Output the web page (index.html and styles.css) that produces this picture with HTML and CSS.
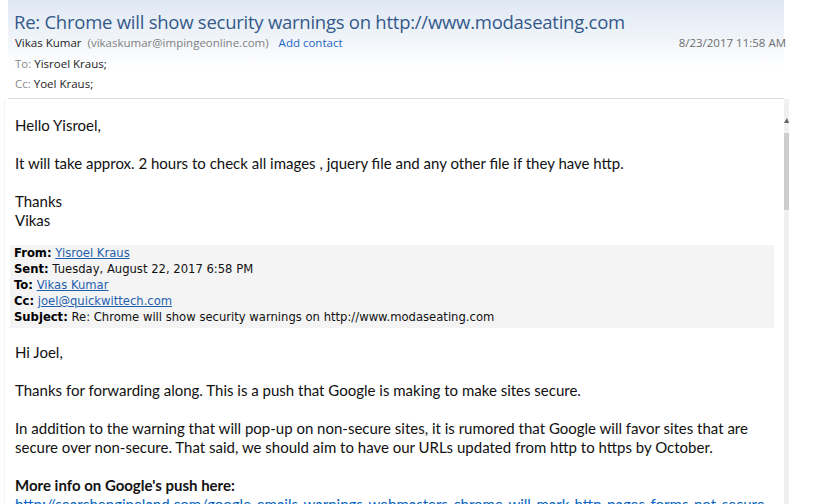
FILE: index.html
```html
<!DOCTYPE html>
<html>
<head>
<meta charset="utf-8">
<link rel="stylesheet" href="styles.css">
</head>
<body>
<div class="window">
  <div class="header">
    <div class="title">Re: Chrome will show security warnings on http://www.modaseating.com</div>
    <div class="meta">
      <div class="sender"><span class="name">Vikas Kumar</span><span class="addr">(vikaskumar@impingeonline.com)</span><a class="add">Add contact</a></div>
      <div class="date">8/23/2017 11:58 AM</div>
    </div>
    <div class="recip first"><span class="lbl">To:</span> Yisroel Kraus;</div>
    <div class="recip"><span class="lbl">Cc:</span> Yoel Kraus;</div>
  </div>
  <div class="content">
    <div class="message">
      <p>Hello Yisroel,</p>
      <p>It will take approx. 2 hours to check all images , jquery file and any other file if they have http.</p>
      <p>Thanks<br>Vikas</p>
      <div class="quote">
        <div><b>From:</b> <a>Yisroel Kraus</a></div>
        <div><b>Sent:</b> Tuesday, August 22, 2017 6:58 PM</div>
        <div><b>To:</b> <a>Vikas Kumar</a></div>
        <div><b>Cc:</b> <a>joel@quickwittech.com</a></div>
        <div><b>Subject:</b> Re: Chrome will show security warnings on http://www.modaseating.com</div>
      </div>
      <p>Hi Joel,</p>
      <p>Thanks for forwarding along. This is a push that Google is making to make sites secure.</p>
      <p>In addition to the warning that will pop-up on non-secure sites, it is rumored that Google will favor sites that are secure over non-secure. That said, we should aim to have our URLs updated from http to https by October.</p>
      <p class="more"><b>More info on Google's push here:</b><br><a class="link">http://searchengineland.com/google-emails-warnings-webmasters-chrome-will-mark-http-pages-forms-not-secure</a></p>
    </div>
    <div class="scrollbar">
      <div class="arrow"></div>
      <div class="thumb"></div>
    </div>
  </div>
</div>
</body>
</html>
```
FILE: styles.css
```css
html, body {
  margin: 0;
  padding: 0;
  background: #fff;
  overflow: hidden;
}
body {
  width: 819px;
  height: 504px;
}
.window {
  width: 790px;
  height: 504px;
  display: flex;
  flex-direction: column;
}
.header {
  background: linear-gradient(#e0e8f3 0px, #f1f5fa 40px, #ffffff 68px);
  padding: 9px 0 0 7px;
  font-family: "Open Sans", "Noto Sans", sans-serif;
  height: 99px;
  box-sizing: border-box;
  border-bottom: 1px solid #dcdcdc;
  margin-left: 8px;
  margin-right: 6px;
}
.title {
  font-size: 18.5px;
  line-height: 26px;
  color: #34598a;
  letter-spacing: -0.25px;
  white-space: nowrap;
  margin-left: -1px;
}
.meta {
  display: flex;
  justify-content: space-between;
  font-size: 11.5px;
  line-height: 16px;
}
.name { color: #1e1e1e; }
.addr { color: #808080; margin-left: 6px; }
.add { color: #2366c2; margin-left: 10px; }
.date { color: #6e6e6e; margin-right: -2px; }
.recip {
  font-size: 11.5px;
  line-height: 20px;
  color: #222;
}
.recip.first { margin-top: 3px; }
.lbl { color: #8a8a8a; }
.content {
  flex: 1;
  display: flex;
  min-height: 0;
}
.message {
  width: 777px;
  box-sizing: border-box;
  padding: 17px 20px 0 10px;
  margin-left: 4px;
  border-left: 1px solid #f2f2f2;
  font-family: "Lato", "Liberation Sans", sans-serif;
  font-size: 15px;
  line-height: 19px;
  color: #111;
  overflow: hidden;
}
.message p {
  margin: 0 0 19px 0;
}
.quote {
  background: #f4f4f4;
  margin: -4px -13px 15px -5px;
  padding: 0 0 3px 4px;
  font-family: "DejaVu Sans", sans-serif;
  font-size: 11.6px;
  line-height: 16px;
  color: #111;
}
.quote b { color: #000; }
.quote a { color: #1f5fae; text-decoration: underline; }
.link { color: #0563c1; text-decoration: underline; white-space: nowrap; }
.more { margin-top: 0; }
.scrollbar {
  width: 5px;
  margin-left: 3px;
  background: #f0f0f0;
}
.arrow {
  margin: 19px 0 0 0;
  width: 0;
  height: 0;
  border-left: 3px solid transparent;
  border-right: 2px solid transparent;
  border-bottom: 5px solid #606060;
}
.thumb {
  margin-top: 10px;
  height: 77px;
  background: #cdcdcd;
}
```
